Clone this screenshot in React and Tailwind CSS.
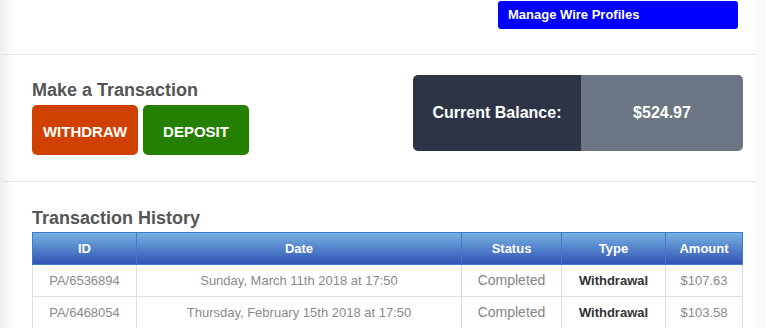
import React from 'react';

const rows = [
  { id: 'PA/6536894', date: 'Sunday, March 11th 2018 at 17:50', status: 'Completed', type: 'Withdrawal', amount: '$107.63' },
  { id: 'PA/6468054', date: 'Thursday, February 15th 2018 at 17:50', status: 'Completed', type: 'Withdrawal', amount: '$103.58' },
];

export default function App() {
  return (
    <div className="h-[328px] w-[766px] overflow-hidden flex bg-[#fafafa] font-['Liberation_Sans',Arial,sans-serif]">
      <div className="w-[3px] bg-[#eeeeee]" />
      <div className="w-[752px] bg-[linear-gradient(to_right,#f2f2f2,#ffffff_12px)]">
        {/* Top bar */}
        <div className="h-[55px] border-b border-[#e3e3e3] flex justify-end pr-[17px]">
          <a className="mt-[1px] w-[240px] h-[28px] rounded-[3px] bg-[#0000ff] text-white text-[13px] font-bold pl-[10px] flex items-center">
            Manage Wire Profiles
          </a>
        </div>

        {/* Transaction actions */}
        <div className="h-[127px] border-b border-[#e3e3e3] flex justify-between pl-[29px] pr-[12px]">
          <div className="pt-[25px]">
            <h2 className="text-[18px] leading-[20px] font-bold text-[#555555]">Make a Transaction</h2>
            <div className="mt-[5px] flex gap-[5px]">
              <button className="w-[106px] h-[50px] pt-[4px] rounded-[5px] bg-[#d04000] text-white text-[15px] font-bold">WITHDRAW</button>
              <button className="w-[106px] h-[50px] pt-[4px] rounded-[5px] bg-[#268000] text-white text-[15px] font-bold">DEPOSIT</button>
            </div>
          </div>
          <div className="mt-[20px] w-[330px] h-[76px] rounded-[5px] overflow-hidden flex text-white font-bold text-[16px]">
            <div className="w-[168px] bg-[#2d3445] flex items-center justify-center">Current Balance:</div>
            <div className="flex-1 bg-[#6b7583] flex items-center justify-center">$524.97</div>
          </div>
        </div>

        {/* History */}
        <div className="pl-[29px] pt-[26px]">
          <h2 className="text-[18px] leading-[20px] font-bold text-[#555555]">Transaction History</h2>
          <table className="mt-[4px] w-[710px] border-collapse table-fixed text-[13px]">
            <colgroup>
              <col className="w-[104px]" />
              <col className="w-[325px]" />
              <col className="w-[100px]" />
              <col className="w-[104px]" />
              <col className="w-[77px]" />
            </colgroup>
            <thead>
              <tr className="h-[32px] bg-[linear-gradient(to_bottom,#76b2e2,#3050b4)] text-white font-bold">
                {['ID', 'Date', 'Status', 'Type', 'Amount'].map((h) => (
                  <th key={h} className="border border-[#3d7bcb] p-0 font-bold">{h}</th>
                ))}
              </tr>
            </thead>
            <tbody>
              {rows.map((r) => (
                <tr key={r.id} className="h-[32px] text-center text-[#8a8a8a]">
                  <td className="border border-[#dddddd] p-0">{r.id}</td>
                  <td className="border border-[#dddddd] p-0">{r.date}</td>
                  <td className="border border-[#dddddd] p-0 text-[14px] text-[#858585]">{r.status}</td>
                  <td className="border border-[#dddddd] p-0 font-bold text-[#333333]">{r.type}</td>
                  <td className="border border-[#dddddd] p-0">{r.amount}</td>
                </tr>
              ))}
            </tbody>
          </table>
        </div>
      </div>
    </div>
  );
}
